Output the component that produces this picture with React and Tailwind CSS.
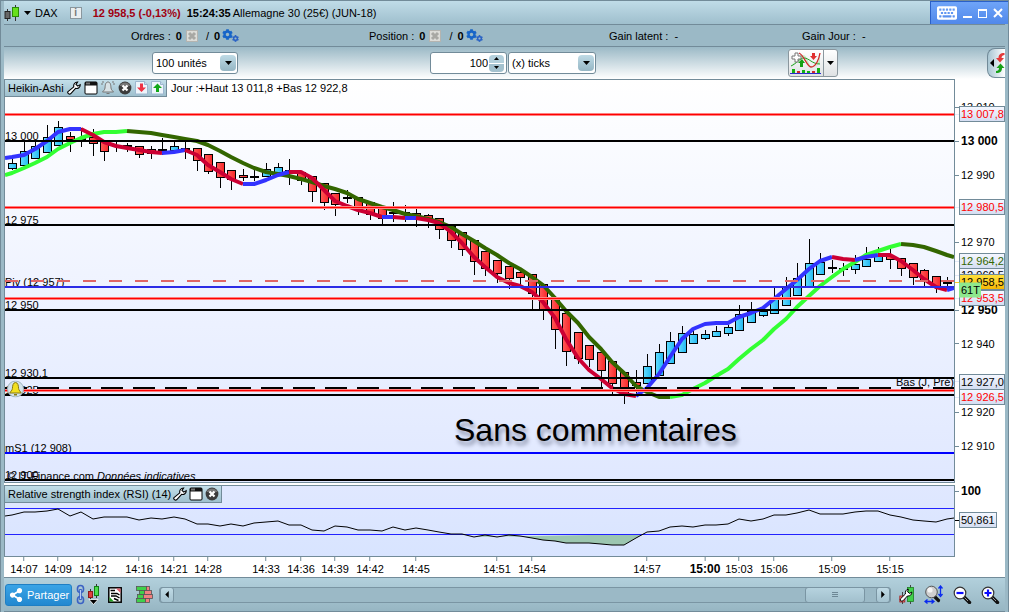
import { FaCog, FaKeyboard, FaShareAlt } from "react-icons/fa";

// plot coordinates: x 5..954, y 80..482 (price) and 486..556 (rsi)
const xAt = (i) => Math.min(954, Math.max(5, Math.round(12 + 11.547 * i)));
const pricePct = (y) => `${((y - 80) / 402) * 100}%`;
const rsiPct = (y) => `${((y - 486) / 70) * 100}%`;
const timePct = (i) => `${((xAt(i) - 5) / 949) * 100}%`;

// high, body top, body bottom, low, u(p) / d(own) / n(eutral)
const candles = [
  [155, 163, 168, 170, "u"], [141, 151, 165, 166, "u"], [141, 146, 158, 159, "u"],
  [125, 137, 152, 153, "u"], [121, 127, 145, 146, "u"], [132, 136, 139, 152, "d"],
  [128, 138, 139, 147, "n"], [129, 137, 143, 156, "d"], [140, 141, 151, 161, "d"],
  [141, 145, 146, 152, "n"], [143, 145, 146, 152, "n"], [146, 146, 154, 158, "d"],
  [146, 149, 153, 159, "d"], [138, 149, 150, 155, "n"], [140, 146, 150, 152, "u"],
  [141, 148, 149, 159, "n"], [148, 148, 160, 171, "d"], [154, 154, 171, 174, "d"],
  [162, 162, 177, 188, "d"], [170, 170, 179, 190, "d"], [169, 175, 177, 181, "d"],
  [170, 176, 177, 181, "n"], [163, 169, 176, 176, "u"], [163, 167, 172, 172, "u"],
  [159, 170, 171, 185, "n"], [172, 172, 180, 185, "d"], [176, 176, 191, 202, "d"],
  [183, 183, 202, 210, "d"], [193, 193, 204, 216, "d"], [190, 197, 198, 203, "n"],
  [197, 197, 208, 215, "d"], [202, 202, 214, 220, "d"], [208, 208, 218, 224, "d"],
  [202, 212, 213, 222, "n"], [205, 212, 213, 222, "n"], [209, 213, 216, 227, "d"],
  [214, 215, 220, 228, "d"], [218, 218, 229, 239, "d"], [226, 226, 240, 248, "d"],
  [232, 232, 249, 256, "d"], [240, 240, 261, 275, "d"], [251, 251, 268, 276, "d"],
  [260, 260, 273, 283, "d"], [266, 266, 278, 289, "d"], [271, 272, 277, 285, "d"],
  [274, 274, 293, 309, "d"], [284, 284, 309, 320, "d"], [297, 297, 329, 349, "d"],
  [313, 313, 351, 366, "d"], [332, 332, 358, 364, "d"], [345, 345, 359, 367, "d"],
  [352, 352, 370, 387, "d"], [361, 361, 383, 394, "d"], [372, 372, 393, 404, "d"],
  [370, 382, 385, 395, "d"], [354, 366, 383, 383, "u"], [344, 352, 375, 375, "u"],
  [332, 341, 363, 363, "u"], [326, 333, 352, 352, "u"], [331, 334, 343, 343, "u"],
  [330, 334, 338, 340, "u"], [326, 331, 336, 337, "u"], [325, 327, 333, 336, "u"],
  [305, 314, 330, 330, "u"], [302, 311, 322, 322, "u"], [307, 311, 315, 317, "u"],
  [288, 298, 313, 313, "u"], [277, 287, 305, 305, "u"], [263, 278, 295, 295, "u"],
  [239, 263, 286, 286, "u"], [253, 262, 274, 274, "u"], [260, 267, 268, 273, "n"],
  [263, 268, 269, 276, "n"], [255, 264, 269, 274, "u"], [247, 259, 266, 266, "u"],
  [247, 256, 261, 261, "u"], [249, 256, 259, 269, "d"], [258, 258, 268, 276, "d"],
  [263, 263, 277, 285, "d"], [269, 270, 280, 286, "d"], [276, 276, 286, 293, "d"],
  [277, 282, 283, 288, "d"],
];

const BLUE = "#3333ff";
const RED = "#cc0033";
const LIME = "#33ff33";
const GREEN = "#336600";

const slowAverage = [
  { color: LIME, from: -1, ys: [175, 173, 168, 163, 157, 149, 143, 138, 134, 132, 132, 131] },
  {
    color: GREEN,
    from: 10,
    ys: [
      131, 132, 133, 135, 137, 139, 141, 145, 151, 157, 163, 168, 172, 174, 176, 179, 182, 186, 189,
      193, 199, 203, 207, 210, 214, 216, 219, 222, 227, 234, 241, 248, 255, 263, 269, 277, 285, 298,
      311, 323, 337, 349, 362, 373, 386, 392, 397, 397,
    ],
  },
  {
    color: LIME,
    from: 57,
    ys: [397, 395, 389, 383, 376, 369, 359, 349, 340, 329, 319, 307, 296, 286, 277, 269, 262, 255, 251, 247, 244],
  },
  { color: GREEN, from: 77, ys: [244, 245, 247, 251, 255, 257] },
];

const fastAverage = [
  { color: BLUE, from: -1, ys: [158, 157, 155, 149, 141, 132, 129, 129] },
  { color: RED, from: 6, ys: [129, 135, 142, 146, 148, 150, 152, 153] },
  { color: BLUE, from: 13, ys: [153, 152, 150] },
  { color: RED, from: 15, ys: [150, 155, 165, 172, 179, 184] },
  { color: BLUE, from: 20, ys: [184, 184, 180, 175, 172] },
  { color: RED, from: 24, ys: [172, 172, 178, 190, 201, 206, 210, 213, 217] },
  { color: BLUE, from: 32, ys: [217, 217] },
  { color: RED, from: 33, ys: [217, 218] },
  { color: BLUE, from: 34, ys: [218, 218] },
  {
    color: RED,
    from: 35,
    ys: [218, 220, 223, 232, 243, 257, 267, 277, 283, 286, 292, 302, 318, 339, 358, 370, 379, 388, 394, 396],
  },
  {
    color: BLUE,
    from: 54,
    ys: [396, 388, 374, 357, 339, 329, 324, 323, 323, 317, 313, 308, 299, 289, 280, 269, 261, 257],
  },
  { color: RED, from: 71, ys: [257, 259, 260] },
  { color: BLUE, from: 73, ys: [260, 257, 255] },
  { color: RED, from: 75, ys: [255, 255, 261, 270, 279, 287, 290] },
  { color: BLUE, from: 81, ys: [290, 288] },
];

const rsi = [
  516, 515, 512, 512, 511, 509, 516, 512, 519, 517, 517, 517, 520, 518, 519, 517, 519, 524, 524, 526,
  524, 526, 523, 522, 521, 525, 525, 530, 531, 526, 527, 530, 530, 531, 527, 530, 528, 530, 532, 534,
  534, 537, 535, 537, 535, 536, 538, 540, 541, 543, 543, 543, 544, 545, 545, 538, 532, 531, 527, 526,
  527, 525, 525, 524, 519, 521, 519, 515, 515, 513, 510, 514, 514, 514, 512, 511, 511, 515, 517, 520,
  521, 522, 519, 518,
];

const times = [
  [1, "14:07"], [4, "14:09"], [7, "14:12"], [11, "14:16"], [14, "14:21"], [17, "14:28"],
  [22, "14:33"], [25, "14:36"], [28, "14:39"], [31, "14:42"], [35, "14:45"], [42, "14:51"],
  [45, "14:54"], [55, "14:57"], [60, "15:00", true], [63, "15:03"], [66, "15:06"],
  [71, "15:09"], [76, "15:15"],
];

const prices = [
  [107, "13 010"], [141, "13 000", true], [175, "12 990"], [242, "12 970"],
  [310, "12 950", true], [344, "12 940"], [412, "12 920"], [446, "12 910"],
];

const tags = [
  { y: 114, text: "13 007,8", style: "text-[#ff0000] bg-linear-to-b from-[#f4f7ff] to-[#d5def2]" },
  { y: 207, text: "12 980,5", style: "text-[#ff0000] bg-linear-to-b from-[#f4f7ff] to-[#d5def2]" },
  { y: 275, text: "12 960,5", style: "text-black bg-linear-to-b from-[#f4f7ff] to-[#d5def2]" },
  { y: 261, text: "12 964,2", style: "text-[#336600] bg-linear-to-b from-[#f4f7ff] to-[#d5def2]" },
  { y: 298, text: "12 953,5", style: "text-[#ff0000] bg-linear-to-b from-[#f4f7ff] to-[#d5def2]" },
  { y: 282, text: "12 958,5", style: "text-black bg-linear-to-b from-[#ffe03a] to-[#f5b800]" },
  { y: 382, text: "12 927,0", style: "text-black bg-linear-to-b from-[#f4f7ff] to-[#d5def2]" },
  { y: 397, text: "12 926,5", style: "text-[#ff0000] bg-linear-to-b from-[#f4f7ff] to-[#d5def2]" },
];

const levelLabels = [
  [136, "13 000"], [220, "12 975"], [282, "Piv (12 957)"], [305, "12 950"],
  [373, "12 930,1"], [390, "12 925"], [448, "mS1 (12 908)"], [475, "12 900"],
];

const blackLevels = [141, 225, 310, 378, 395, 480];
const redLevels = [114.5, 207.5, 298.5, 390.5];

const Caret = ({ className = "w-[7px] h-1" }) => (
  <svg viewBox="0 0 8 4" className={className} preserveAspectRatio="none">
    <path d="M0 0H8L4 4Z" fill="#000" />
  </svg>
);

const WrenchIcon = () => (
  <svg viewBox="0 0 14 14" className="w-[14px] h-[14px]">
    <path
      d="M1 10.6 6.8 5.8C6.2 3.4 7.8 1 10.6 1L9 3.4 10.8 5.1 13.2 3.6C13.4 6.4 11 8 8.6 7.4L3.6 12.8C2.2 13.8 0 12.2 1 10.6Z"
      fill="#fff"
      stroke="#000"
      strokeWidth="1.1"
    />
  </svg>
);

const WindowIcon = () => (
  <svg viewBox="0 0 14 14" className="w-[14px] h-[14px]">
    <rect x="1" y="1" width="12" height="12" rx="1" fill="#fff" stroke="#000" strokeWidth="1" />
    <path d="M1 1H13V4.5H1Z" fill="#111" />
    <path d="M2 1.5H6V3.5H2Z" fill="#777" />
  </svg>
);

const CloseIcon = () => (
  <svg viewBox="0 0 14 14" className="w-[14px] h-[14px]">
    <circle cx="7" cy="7" r="6.4" fill="#3c3c3c" />
    <path d="M1.5 5A6 6 0 0 1 12.5 5Z" fill="#777" />
    <path d="M4.5 4.5 9.5 9.5M9.5 4.5 4.5 9.5" stroke="#fff" strokeWidth="2.2" />
  </svg>
);

const BellIcon = () => (
  <svg viewBox="0 0 14 14" className="w-[14px] h-[14px]">
    <path d="M7 1C4.5 1 4.2 4 4 7 3.8 9 2.5 9.5 1.5 11H12.5C11.5 9.5 10.2 9 10 7 9.8 4 9.5 1 7 1Z" fill="#d8e2e6" stroke="#777" />
    <path d="M5.5 12H8.5V13H5.5Z" fill="#777" />
    <path d="M1 4V1H3M11 1H13V4" fill="none" stroke="#777" strokeDasharray="2 1" />
  </svg>
);

const PageArrowIcon = ({ up }) => (
  <svg viewBox="0 0 13 14" className="w-[13px] h-[14px]">
    <path d="M.5.5H9.5L12.5 3.5V13H.5Z" fill="#eef5fb" stroke="#9db7cf" />
    <path d="M9.5.5V3.5H12.5" fill="#c7dbee" stroke="#9db7cf" />
    {up ? (
      <path d="M6.5 2.5 11 7H8V11H5V7H2Z" fill="#12a818" />
    ) : (
      <path d="M5 2.5H8V6.5H11L6.5 11 2 6.5H5Z" fill="#ee3344" />
    )}
  </svg>
);

const CandlesIcon = () => (
  <svg viewBox="0 0 16 18" className="w-4 h-[18px]">
    <path d="M3.5 5V17M11.5 1V17" stroke="#333" />
    <rect x="1" y="7.5" width="5" height="7" fill="#666" stroke="#222" />
    <rect x="8.5" y="3.5" width="6" height="9" fill="#66e01c" stroke="#2c8a0a" />
  </svg>
);

const CancelIcon = () => (
  <svg viewBox="0 0 12 12" className="w-3 h-3">
    <rect x=".5" y=".5" width="11" height="11" fill="#dcdcd8" stroke="#b4b4b0" />
    <path d="M3 3 9 9M9 3 3 9" stroke="#a8a8a4" strokeWidth="3" />
  </svg>
);

const Gears = () => (
  <span className="flex w-4 items-end">
    <FaCog className="h-[11px] w-[11px] -mr-px mb-0.5 shrink-0 text-[#1765c8]" />
    <FaCog className="h-[7px] w-[7px] shrink-0 text-[#2a62c4]" />
  </span>
);

const IndicatorsIcon = () => (
  <svg viewBox="0 0 32 22" className="w-8 h-[22px]">
    <path d="M1 14C6 9 9 3 13 3 18 3 19 16 23 16 27 16 29 8 30 3V11C27 14 25 16 22 16 17 16 18 6 13 6 9 6 6 13 1 14Z" fill="#c6ecc6" />
    <path d="M1 14C6 12 10 6 14 6 19 6 22 12 30 12" fill="none" stroke="#20a020" />
    <path d="M9 1C14 3 17 15 21 15 26 15 29 7 30 1" fill="none" stroke="#d02a2a" strokeWidth="1.3" />
    <path d="M12 7 15 11H13V15H10V11H8Z" fill="#14a014" />
    <path d="M22 1H25V4H27L23.5 8 20 4H22Z" fill="#e03030" />
    <path d="M5 1H8V4H11V7H8V10H5V7H2V4H5Z" fill="#fff" stroke="#777" />
    <path d="M2 17H5V21H2ZM12 18H15V21H12ZM17 19H20V21H17ZM27 16H30V21H27Z" fill="#12b012" />
    <path d="M7 19H10V21H7ZM22 19H25V21H22Z" fill="#d02a2a" />
    <path d="M0 21.5H31" stroke="#2a2ad0" />
  </svg>
);

const SwapIcon = () => (
  <svg viewBox="0 0 10 22" className="w-[10px] h-[22px]">
    <path d="M9.5 1C5 1 3.5 3 3.5 6H6.5C6.5 4 8 3 9.5 3Z" fill="#e23a3a" />
    <path d="M1 6H9L5 10.5Z" fill="#e23a3a" />
    <path d="M1 21C5.5 21 7 19 7 16H4C4 18 3 19 1 19Z" fill="#18a018" />
    <path d="M1.5 16H9.5L5.5 11.5Z" fill="#18a018" />
  </svg>
);

const ChainIcon = () => (
  <svg viewBox="0 0 24 21" className="w-6 h-[21px]">
    <g fill="none" stroke="#3b62c4" strokeWidth="1.6">
      <rect x="1.5" y="1.5" width="6" height="7" rx="3" />
      <rect x="1.5" y="12.5" width="6" height="7" rx="3" />
      <path d="M4.5 5V16" strokeWidth="2.6" />
    </g>
    <path d="M4.5 6V15" stroke="#b8ccf8" />
    <path d="M14.5 5V16M20.5 0V14" stroke="#333" />
    <rect x="12.5" y="7.5" width="4" height="6" fill="#e04040" stroke="#8c1a1a" />
    <rect x="18.5" y="2.5" width="4" height="9" fill="#4ddc4d" stroke="#138013" />
    <path d="M13 15.5H22L17.5 20.5Z" fill="#000" stroke="#fff" strokeWidth=".8" />
  </svg>
);

const NewsIcon = () => (
  <svg viewBox="0 0 14 16" className="w-[14px] h-4">
    <rect x=".8" y=".8" width="12.4" height="14.4" fill="#fff" stroke="#000" strokeWidth="1.5" />
    <path d="M8 1.5H12.5V6Z" fill="#e06070" />
    <path d="M1.5 10V14.5H6Z" fill="#22a022" />
    <path d="M2.5 3.5H7M3 6.5H9L11.5 8M3 9H8L11.5 11M6 11.5 10.5 13.5" fill="none" stroke="#000" strokeWidth="1.4" />
  </svg>
);

const DepthIcon = () => (
  <svg viewBox="0 0 17 17" className="w-[17px] h-[17px]">
    <g fill="#3fd04a" stroke="#555" strokeWidth=".8">
      <rect x=".5" y=".5" width="10" height="4" />
      <rect x="3.5" y="4.5" width="5" height="4" />
      <rect x="1.5" y="8.5" width="6" height="4" />
      <rect x=".5" y="12.5" width="9" height="4" />
    </g>
    <g fill="#f08080" stroke="#555" strokeWidth=".8">
      <rect x="10.5" y=".5" width="3" height="4" />
      <rect x="8.5" y="4.5" width="7" height="4" />
      <rect x="7.5" y="8.5" width="9" height="4" />
      <rect x="9.5" y="12.5" width="4" height="4" />
    </g>
  </svg>
);

const ChartSettingsIcon = () => (
  <svg viewBox="0 0 16 19" className="w-4 h-[19px]">
    <path d="M3.5 7V19M11.5 0V19" stroke="#444" />
    <rect x=".8" y="11" width="5" height="6" fill="#f07070" stroke="#a02020" strokeWidth=".8" />
    <rect x="8.5" y="2.5" width="6" height="14" fill="#3fd04a" stroke="#1d7d22" strokeWidth=".8" />
    <path
      d="M1.5 13.8 6.4 9C6 6.6 7 4.4 9.4 4.2L8.6 6.8 10.6 8.4 12.8 7C13 9.6 11 11.4 8.4 11L4 15.8C2.6 17 .5 15.4 1.5 13.8Z"
      fill="#fff"
      stroke="#000"
    />
  </svg>
);

const MagnifierIcon = ({ sign }) => (
  <svg viewBox="0 0 19 18" className="w-[19px] h-[18px]">
    <path d="M11 11 16.5 16.5" stroke="#111" strokeWidth="3.4" strokeLinecap="round" />
    <path d="M11.5 11.5 15 15" stroke="#999" />
    <circle cx="7" cy="7" r="5.8" fill="#fff" stroke="#333" strokeWidth="1.2" />
    <path d={sign === "plus" ? "M3.5 7H10.5M7 3.5V10.5" : "M3.5 7H10.5"} stroke="#0a0aff" strokeWidth="2.2" />
  </svg>
);

const ZoomFitIcon = () => (
  <svg viewBox="0 0 20 19" className="w-5 h-[19px]">
    <path d="M10 11 14.5 15.5" stroke="#111" strokeWidth="3.2" strokeLinecap="round" />
    <circle cx="7.5" cy="7" r="5.8" fill="#cfcfcf" stroke="#555" />
    <circle cx="6" cy="5" r="2.6" fill="#f4f4f4" />
    <path d="M16.5 2V10M14.5 3.5 16.5 1 18.5 3.5M14.5 9 16.5 11.5 18.5 9" fill="none" stroke="#0a2af0" strokeWidth="1.3" />
    <path d="M1.5 16.5H9.5M3.5 14.5 1 16.5 3.5 18.5M7.5 14.5 10 16.5 7.5 18.5" fill="none" stroke="#0a2af0" strokeWidth="1.3" />
  </svg>
);

const AlarmIcon = () => (
  <svg viewBox="0 0 17 17" className="w-[17px] h-[17px]">
    <circle cx="8.5" cy="8.5" r="8" fill="#d3e2ea" stroke="#9fb4c0" />
    <path d="M8.5 2C6 2.2 5.6 5 5.4 8 5.2 10 3.5 11 2.8 12.5H14.2C13.5 11 11.8 10 11.6 8 11.4 5 11 2.2 8.5 2Z" fill="#f2e020" stroke="#8a7a10" />
    <path d="M7 13.5H10V15H7Z" fill="#8a7a10" />
  </svg>
);

const Points = ({ from, ys, color, width }) => (
  <polyline
    points={ys.map((y, k) => `${xAt(from + k)},${y}`).join(" ")}
    fill="none"
    stroke={color}
    strokeWidth={width}
    strokeLinejoin="round"
    vectorEffect="non-scaling-stroke"
  />
);

const Level = ({ y, color, width, dash }) => (
  <line
    x1="5"
    x2="954"
    y1={y}
    y2={y}
    stroke={color}
    strokeWidth={width}
    strokeDasharray={dash}
    shapeRendering="crispEdges"
    vectorEffect="non-scaling-stroke"
  />
);

const SelectBox = ({ label, value, className }) => (
  <label className={`relative block h-[22px] ${className}`}>
    <span className="sr-only">{label}</span>
    <select
      defaultValue={value}
      className="block h-full w-full appearance-none rounded-[3px] border border-[#728b99] bg-white pl-[3px] pr-5 text-[11px] text-black"
    >
      <option>{value}</option>
    </select>
    <span className="pointer-events-none absolute right-0.5 top-[3px] flex h-4 w-4 items-center justify-center rounded-sm bg-linear-to-b from-[#bfdbe6] to-[#95b6c4]">
      <Caret />
    </span>
  </label>
);

const OrderCount = ({ label }) => (
  <div className="flex items-center whitespace-pre">
    {label} : <b className="ml-0.5">0</b>
    <span className="mx-1">
      <CancelIcon />
    </span>
    <span className="ml-1">/ </span>
    <b className="mx-0.5">0</b>
    <Gears />
  </div>
);

const TitleBar = () => (
  <header className="flex h-6 border-b border-[#728b99] bg-linear-to-b from-[#c0dce8] to-[#9fbfcd]">
    <div className="flex flex-1 items-center">
      <CandlesIcon />
      <button aria-label="Instrument" className="ml-1 flex h-4 w-2 items-center">
        <Caret />
      </button>
      <h1 className="ml-[3px] text-[11px]">DAX</h1>
      <button className="ml-3 h-3 w-3 border border-[#8a979e] bg-[#e9eef0] text-[10px] font-bold leading-[10px] text-[#777]">
        i
      </button>
      <b className="ml-[11px] text-[#a00010]">12 958,5 (-0,13%)</b>
      <b className="ml-1.5">15:24:35</b>
      <span className="ml-0.5">Allemagne 30 (25€) (JUN-18)</span>
    </div>
    <div className="-mr-[3px] flex w-[78px] items-center border-l border-t border-[#2a60c8] bg-linear-to-b from-[#6fa4f8] to-[#5088ea] pl-1.5 text-white">
      <button aria-label="Clavier">
        <FaKeyboard className="h-5 w-5" />
      </button>
      <button aria-label="Réduire" className="ml-1.5 flex h-3 w-[9px] items-end pb-px">
        <span className="h-0.5 w-full bg-white" />
      </button>
      <button aria-label="Agrandir" className="ml-1.5 h-[9px] w-[9px] border border-t-2 border-white" />
      <button aria-label="Fermer" className="ml-1.5">
        <svg viewBox="0 0 10 10" className="h-2.5 w-2.5">
          <path d="M1 1 9 9M9 1 1 9" stroke="#fff" strokeWidth="2" />
        </svg>
      </button>
    </div>
  </header>
);

const PositionBar = () => (
  <div className="grid h-[22px] grid-cols-[238fr_240fr_193fr_203fr] items-center border-b border-[#728b99] bg-[#9bb9c6] pl-[127px]">
    <OrderCount label="Ordres" />
    <OrderCount label="Position" />
    <div>Gain latent : &nbsp;-</div>
    <div>Gain Jour : &nbsp;-</div>
  </div>
);

const SettingsBar = () => (
  <div className="grid h-8 grid-cols-[278fr_358fr_199fr_18px] items-center bg-linear-to-b from-[#9bb9c6] to-white pl-[148px]">
    <SelectBox label="Période" value="100 unités" className="w-[86px]" />
    <div className="flex gap-px">
      <div className="flex h-[22px] w-[77px] items-center rounded-[3px] border border-[#728b99] bg-white pr-0.5">
        <input aria-label="Nombre" defaultValue="100" className="w-0 flex-1 pr-px text-right text-[11px]" />
        <div className="flex flex-col gap-px">
          <button aria-label="Plus" className="flex h-2 w-[15px] items-center justify-center rounded-t-sm bg-[#b4d0dc]">
            <Caret className="h-[3px] w-[5px] rotate-180" />
          </button>
          <button aria-label="Moins" className="flex h-2 w-[15px] items-center justify-center rounded-b-sm bg-[#a3c1ce]">
            <Caret className="h-[3px] w-[5px]" />
          </button>
        </div>
      </div>
      <SelectBox label="Unité" value="(x) ticks" className="w-[88px]" />
    </div>
    <div className="flex h-7 w-[50px] rounded-[3px] border border-[#8b979e] bg-linear-to-b from-white to-[#dfe2e4]">
      <button aria-label="Indicateurs" className="flex flex-1 items-center justify-center">
        <IndicatorsIcon />
      </button>
      <button aria-label="Liste des indicateurs" className="flex w-3.5 items-center justify-center border-l border-[#8b979e]">
        <Caret />
      </button>
    </div>
    <button
      aria-label="Panneau d'ordres"
      className="flex h-[30px] w-[18px] items-center gap-px rounded-l-lg border border-r-0 border-[#728b99] bg-linear-to-r from-[#a9c6d3] to-white pl-0.5"
    >
      <svg viewBox="0 0 4 8" className="h-2 w-1 shrink-0">
        <path d="M4 0V8L0 4Z" fill="#000" />
      </svg>
      <SwapIcon />
    </button>
  </div>
);

const PricePlot = () => (
  <div className="relative min-h-[200px] flex-1 overflow-hidden border border-[#728b99] bg-linear-to-b from-white to-[#e0e8ff]">
    {levelLabels.map(([y, text]) => (
      <span key={text} className="absolute left-0 -translate-y-1/2 leading-3" style={{ top: pricePct(y) }}>
        {text}
      </span>
    ))}
    <span className="absolute right-0 -translate-y-1/2 leading-3" style={{ top: pricePct(382) }}>
      Bas (J, Pré)
    </span>
    <span className="absolute left-0.5 -translate-y-1/2 whitespace-pre leading-3" style={{ top: pricePct(476) }}>
      © IT-Finance.com <i>Données indicatives</i>
    </span>
    <svg viewBox="5 80 949 402" preserveAspectRatio="none" className="absolute inset-0 h-full w-full">
      <defs>
        <linearGradient id="up">
          <stop offset="0" stopColor="#62dcff" />
          <stop offset="1" stopColor="#22b8f0" />
        </linearGradient>
        <linearGradient id="down">
          <stop offset="0" stopColor="#ff5a5a" />
          <stop offset="1" stopColor="#f82828" />
        </linearGradient>
      </defs>
      <g stroke="#000" shapeRendering="crispEdges">
        {candles.map(([high, top, bottom, low, kind], i) => {
          const x = xAt(i) + 0.5;
          return (
            <g key={i}>
              <path d={`M${x} ${high}V${low}`} />
              {kind === "n" ? (
                <path d={`M${x - 4.5} ${top + 0.5}H${x + 4.5}`} strokeWidth="2" />
              ) : (
                <rect
                  x={x - 4}
                  y={top + 0.5}
                  width="8"
                  height={bottom - top}
                  fill={kind === "u" ? "url(#up)" : "url(#down)"}
                />
              )}
            </g>
          );
        })}
      </g>
      {slowAverage.map((s) => (
        <Points key={s.from} {...s} width="4" />
      ))}
      {fastAverage.map((s) => (
        <Points key={s.from} {...s} width="4" />
      ))}
      <Level y={281} color="#e06666" width="2" dash="13 13" />
      <Level y={287} color="#2c2ce6" width="2" />
      <Level y={453} color="#0000ff" width="2" />
      <Level y={388.5} color="#000" width="3" dash="22 10" />
      {redLevels.map((y) => (
        <g key={y}>
          <Level y={y} color="#ff8080" width="3" />
          <Level y={y} color="#ff0000" width="1" />
        </g>
      ))}
      {blackLevels.map((y) => (
        <Level key={y} y={y} color="#000" width="2" />
      ))}
    </svg>
    <div className="absolute left-0.5 -translate-y-1/2" style={{ top: pricePct(389) }}>
      <AlarmIcon />
    </div>
    <p
      className="absolute left-[449px] -translate-y-1/2 whitespace-nowrap text-[32px] leading-9 text-black [text-shadow:2px_4px_4px_#8088a0]"
      style={{ top: pricePct(430) }}
    >
      Sans commentaires
    </p>
    <div className="absolute left-0 top-0 flex h-[17px] items-center gap-[3px] border-b border-r border-[#728b99] bg-linear-to-b from-[#c3dfea] to-[#9fc0ce] pl-[3px] pr-0.5">
      <span>Heikin-Ashi</span>
      <button aria-label="Réglages"><WrenchIcon /></button>
      <button aria-label="Fenêtre"><WindowIcon /></button>
      <button aria-label="Alarme"><BellIcon /></button>
      <button aria-label="Fermer"><CloseIcon /></button>
      <button aria-label="Descendre"><PageArrowIcon /></button>
      <button aria-label="Monter"><PageArrowIcon up /></button>
    </div>
    <span className="absolute left-[166px] top-0.5 leading-3">Jour :+Haut 13 011,8 +Bas 12 922,8</span>
  </div>
);

const PriceAxis = () => (
  <div className="relative my-px w-[50px] shrink-0 overflow-hidden bg-white">
    {prices.map(([y, text, strong]) => (
      <div
        key={text}
        className="absolute left-0 flex -translate-y-1/2 items-center gap-0.5 whitespace-nowrap leading-3"
        style={{ top: pricePct(y) }}
      >
        <span className="h-px w-1 bg-[#728b99]" />
        <span className={strong ? "text-xs font-bold leading-3" : ""}>{text}</span>
      </div>
    ))}
    {tags.map(({ y, text, style }) => (
      <div key={text} className="absolute left-0 flex -translate-y-1/2 items-center" style={{ top: pricePct(y) }}>
        <span className={`h-px w-1 ${style}`} />
        <span className={`h-4 w-[46px] whitespace-nowrap border border-[#728b99] pl-px leading-[14px] ${style}`}>
          {text}
        </span>
      </div>
    ))}
    <span
      className="absolute left-1 h-[15px] w-[22px] -translate-y-1/2 bg-[#8ee88e] pl-0.5 leading-[15px] text-black"
      style={{ top: pricePct(290) }}
    >
      61T
    </span>
  </div>
);

const RsiPlot = () => {
  const low = rsi
    .map((y, k) => [xAt(k - 1), y])
    .filter(([x]) => x > 468 && x < 642)
    .map(([x, y]) => `${x},${Math.max(y, 534)}`);
  return (
    <div className="relative h-[72px] flex-1 overflow-hidden border border-[#728b99] bg-linear-to-b from-[#e0e8ff] to-[#d8e4ff]">
      <svg viewBox="5 486 949 70" preserveAspectRatio="none" className="absolute inset-0 h-full w-full">
        <polygon points={`${low.join(" ")} 644,534`} fill="#9cc6b0" />
        <Level y={508.5} color="#2222ff" width="1" />
        <Level y={534.5} color="#2222ff" width="1" />
        <Points from={-1} ys={rsi} color="#000" width="1" />
      </svg>
      <div className="absolute left-0 top-0 flex h-[17px] items-center gap-0.5 border-b border-r border-[#728b99] bg-linear-to-b from-[#c3dfea] to-[#9fc0ce] pl-[3px] pr-0.5">
        <span>Relative strength index (RSI) (14)</span>
        <button aria-label="Réglages"><WrenchIcon /></button>
        <button aria-label="Fenêtre"><WindowIcon /></button>
        <button aria-label="Fermer"><CloseIcon /></button>
      </div>
    </div>
  );
};

const RsiAxis = () => (
  <div className="relative my-px w-[50px] shrink-0 bg-white">
    <div className="absolute left-0 flex -translate-y-1/2 items-center gap-0.5" style={{ top: rsiPct(491) }}>
      <span className="h-px w-1 bg-[#728b99]" />
      <b className="text-xs leading-3">100</b>
    </div>
    <div className="absolute left-0 flex -translate-y-1/2 items-center" style={{ top: rsiPct(520) }}>
      <span className="h-px w-1 bg-black" />
      <span className="h-4 border border-[#728b99] bg-linear-to-b from-[#f4f7ff] to-[#d5def2] px-px leading-[14px]">
        50,861
      </span>
    </div>
  </div>
);

const TimeAxis = () => (
  <div className="relative mr-[51px] ml-px h-5 bg-white">
    {times.map(([i, text, strong]) => (
      <div key={text} className="absolute top-0 flex -translate-x-1/2 flex-col items-center" style={{ left: timePct(i) }}>
        <span className="h-1 w-px bg-[#728b99]" />
        <span className={strong ? "mt-0.5 text-xs font-bold leading-3" : "mt-0.5 leading-3"}>{text}</span>
      </div>
    ))}
  </div>
);

const BottomBar = () => (
  <footer className="flex h-[35px] items-center border-b border-t border-[#728b99] bg-linear-to-b from-[#b2d0dc] to-[#97b6c3] pl-px pr-[5px]">
    <button className="flex h-[22px] w-[67px] items-center gap-1 rounded-[3px] border border-[#1f7fc4] bg-linear-to-b from-[#3aa4e6] to-[#2288d0] pl-[3px] text-white">
      <FaShareAlt className="h-3.5 w-3.5" />
      Partager
    </button>
    <button aria-label="Lier les graphiques" className="ml-1"><ChainIcon /></button>
    <button aria-label="Actualités" className="ml-2"><NewsIcon /></button>
    <button aria-label="Carnet d'ordres" className="ml-3.5"><DepthIcon /></button>
    <div className="ml-1.5 mr-2 flex h-4 flex-1 items-center rounded-[3px] border border-[#7a95a3] bg-[#9bb9c6]">
      <button aria-label="Reculer" className="flex h-4 w-3.5 items-center justify-center rounded-[3px] border border-[#7a95a3] bg-linear-to-b from-[#c0dbe6] to-[#a5c3d0]">
        <svg viewBox="0 0 4 8" className="h-[7px] w-1"><path d="M4 0V8L0 4Z" fill="#000" /></svg>
      </button>
      <div className="flex h-4 flex-1 justify-end pr-[11px]">
        <div className="flex w-[60px] flex-col items-center justify-center gap-px rounded-[3px] border border-[#7a95a3] bg-linear-to-b from-[#b6d3df] to-[#a2c0cd]">
          <span className="h-px w-1.5 bg-[#6d8795]" />
          <span className="h-px w-1.5 bg-[#6d8795]" />
          <span className="h-px w-1.5 bg-[#6d8795]" />
        </div>
      </div>
      <button aria-label="Avancer" className="flex h-4 w-3.5 items-center justify-center rounded-[3px] border border-[#7a95a3] bg-linear-to-b from-[#c0dbe6] to-[#a5c3d0]">
        <svg viewBox="0 0 4 8" className="h-[7px] w-1"><path d="M0 0V8L4 4Z" fill="#000" /></svg>
      </button>
    </div>
    <div className="flex items-center gap-[9px]">
      <button aria-label="Réglages du graphique"><ChartSettingsIcon /></button>
      <button aria-label="Ajuster le zoom"><ZoomFitIcon /></button>
      <button aria-label="Zoom arrière"><MagnifierIcon sign="minus" /></button>
      <button aria-label="Zoom avant"><MagnifierIcon sign="plus" /></button>
    </div>
  </footer>
);

export default function App() {
  return (
    <div className="flex h-screen flex-col border border-b-0 border-[#728b99] bg-[#9bb9c6] px-[3px] font-['Liberation_Sans',Arial,sans-serif] text-[11px] leading-3 text-black">
      <TitleBar />
      <PositionBar />
      <SettingsBar />
      <main className="flex flex-1 flex-col bg-white">
        <div className="flex flex-1">
          <PricePlot />
          <PriceAxis />
        </div>
        <div className="mt-0.5 flex">
          <RsiPlot />
          <RsiAxis />
        </div>
        <TimeAxis />
      </main>
      <BottomBar />
    </div>
  );
}
